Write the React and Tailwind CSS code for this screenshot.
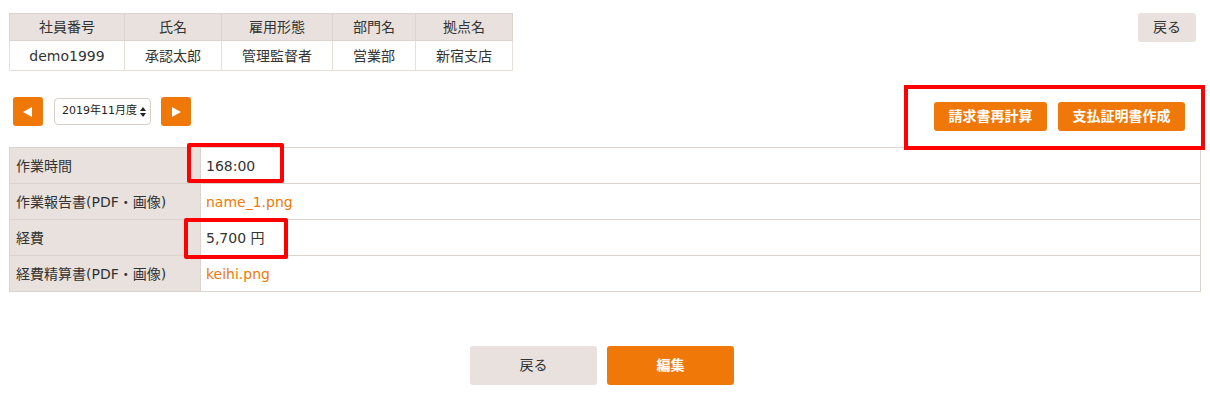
import { useState } from "react";

const font = {
  fontFamily: '"DejaVu Sans", "Noto Sans CJK JP", sans-serif',
};

function ArrowButton({ dir }) {
  return (
    <button className="w-[30px] h-[29px] rounded-[3px] bg-[#ef7808] flex items-center justify-center">
      <svg width="12" height="12" viewBox="0 0 12 12">
        {dir === "left" ? (
          <polygon points="10,1 10,11 1,6" fill="#fff" />
        ) : (
          <polygon points="2,1 2,11 11,6" fill="#fff" />
        )}
      </svg>
    </button>
  );
}

function App() {
  const [month, setMonth] = useState("2019年11月度");

  const staff = [
    ["社員番号", "demo1999", "w-[115px]"],
    ["氏名", "承認太郎", "w-[97px]"],
    ["雇用形態", "管理監督者", "w-[111px]"],
    ["部門名", "営業部", "w-[83px]"],
    ["拠点名", "新宿支店", "w-[97px]"],
  ];

  const rows = [
    { label: "作業時間", value: "168:00", mark: "a" },
    { label: "作業報告書(PDF・画像)", value: "name_1.png", link: true },
    { label: "経費", value: "5,700 円", mark: "b" },
    { label: "経費精算書(PDF・画像)", value: "keihi.png", link: true },
  ];

  return (
    <div
      className="w-[1210px] h-[410px] bg-white pl-[9px] pr-[5px] text-[#333] text-[14px] overflow-hidden"
      style={font}
    >
      {/* top: staff info */}
      <div className="pt-[13px] flex justify-between items-start">
        <table className="border-collapse table-fixed w-[504px]">
          <thead>
            <tr className="bg-[#e8e1dd]">
              {staff.map(([h, , w]) => (
                <th
                  key={h}
                  className={`${w} h-[27px] border border-[#dcd3cc] font-normal text-center leading-none`}
                >
                  {h}
                </th>
              ))}
            </tr>
          </thead>
          <tbody>
            <tr>
              {staff.map(([h, v]) => (
                <td
                  key={h}
                  className="h-[30px] border border-[#e6dfda] text-center leading-none"
                >
                  {v}
                </td>
              ))}
            </tr>
          </tbody>
        </table>
        <button className="mr-[9px] w-[58px] h-[29px] rounded-[3px] bg-[#e8e1dd] text-[#333]">
          戻る
        </button>
      </div>

      {/* month navigation and actions */}
      <div className="mt-[14px] flex justify-between items-start">
        <div className="ml-[4px] mt-[12px] flex items-center">
          <ArrowButton dir="left" />
          <div className="relative ml-[11px] mr-[10px]">
            <select
              value={month}
              onChange={(e) => setMonth(e.target.value)}
              className="appearance-none w-[97px] h-[27px] pl-[7px] pr-[12px] border border-[#d8d0c8] rounded-[4px] bg-white text-[11px] text-[#222] outline-none"
              style={font}
            >
              <option>2019年10月度</option>
              <option>2019年11月度</option>
              <option>2019年12月度</option>
            </select>
            <svg
              className="absolute right-[5px] top-[9px] pointer-events-none"
              width="6"
              height="10"
              viewBox="0 0 6 10"
            >
              <polygon points="3,0 6,4 0,4" fill="#222" />
              <polygon points="0,6 6,6 3,10" fill="#222" />
            </svg>
          </div>
          <ArrowButton dir="right" />
        </div>

        <div className="relative z-10 w-[301px] h-[65px] border-4 border-[#ff0000] flex justify-end items-start gap-[11px] pr-[16px] pt-[13px]">
          <button className="w-[113px] h-[29px] rounded-[3px] bg-[#ef7808] text-white font-bold">
            請求書再計算
          </button>
          <button className="w-[127px] h-[29px] rounded-[3px] bg-[#ef7808] text-white font-bold">
            支払証明書作成
          </button>
        </div>
      </div>

      {/* detail table */}
      <table className="mt-[-3px] w-[1192px] border-collapse table-fixed">
        <tbody>
          {rows.map((r) => (
            <tr key={r.label}>
              <th className="w-[191px] h-[36px] bg-[#e8e1dd] border border-[#dcd3cc] font-normal text-left pl-[6px] leading-none">
                {r.label}
              </th>
              <td className="h-[36px] border border-[#dcd3cc] pl-[5px] leading-none">
                <div className="relative">
                  <span className={r.link ? "text-[#ef7808]" : ""}>
                    {r.value}
                  </span>
                  {r.mark === "a" && (
                    <div className="absolute left-[-19px] top-[-16px] w-[97px] h-[40px] border-4 border-[#ff0000] rounded-[2px]" />
                  )}
                  {r.mark === "b" && (
                    <div className="absolute left-[-22px] top-[-13px] w-[104px] h-[41px] border-4 border-[#ff0000] rounded-[2px]" />
                  )}
                </div>
              </td>
            </tr>
          ))}
        </tbody>
      </table>

      {/* bottom buttons */}
      <div className="mt-[54px] pr-[10px] flex justify-center gap-[10px]">
        <button className="w-[127px] h-[39px] rounded-[3px] bg-[#e8e1dd] text-[#333]">
          戻る
        </button>
        <button className="w-[127px] h-[39px] rounded-[3px] bg-[#ef7808] text-white font-bold">
          編集
        </button>
      </div>
    </div>
  );
}

export default App;
